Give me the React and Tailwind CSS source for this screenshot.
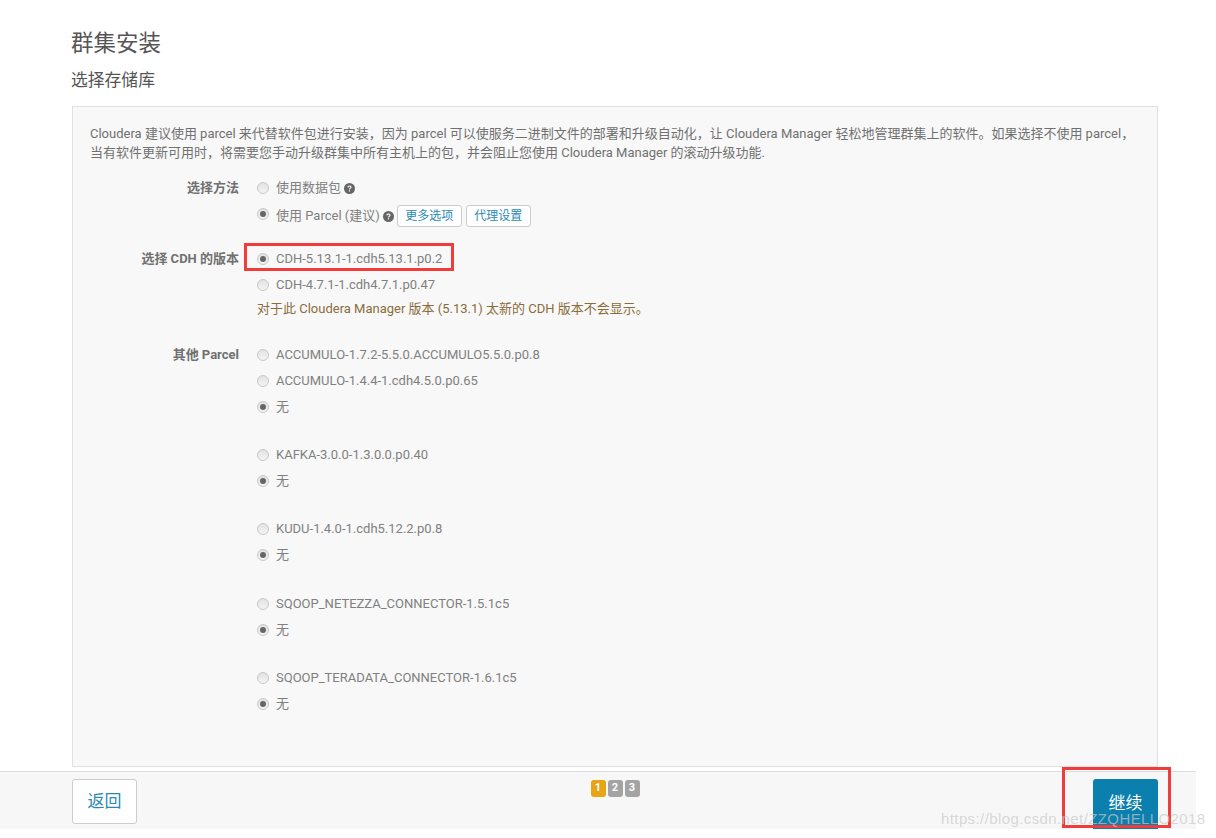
import React from 'react'

function Help({ className }) {
  return (
    <svg viewBox="0 0 24 24" className={'w-[11px] h-[11px] ml-[3px] shrink-0 ' + (className || '')}>
      <circle cx="12" cy="12" r="12" fill="#666" />
      <path d="M7.500 9.500c0-2.600 2-4 4.500-4s4.500 1.400 4.500 3.600c0 3-3.300 2.800-3.300 5.300h-2.500c0-3.500 3.100-3.300 3.100-5.100 0-.8-.8-1.400-1.800-1.400-1.100 0-1.800.7-1.800 1.800z" fill="#f7f7f7" />
      <rect x="10.700" y="15.800" width="2.500" height="2.800" fill="#f7f7f7" />
    </svg>
  )
}

function Radio({ checked, label, labelClass, children }) {
  return (
    <div className="flex items-center h-[26px]">
      <span className="w-[12px] h-[12px] rounded-full border border-[#c8c8c8] bg-gradient-to-b from-[#e2e2e2] to-[#f4f4f4] flex items-center justify-center shrink-0">
        {checked && <span className="w-[6px] h-[6px] rounded-full bg-[#666]" />}
      </span>
      <span className={'ml-[7px] text-[#808080] ' + (labelClass || '')}>{label}</span>
      {children}
    </div>
  )
}

function Row({ label, className, children }) {
  return (
    <div className={'flex ' + (className || '')}>
      <div className="w-[149px] shrink-0 h-[26px] leading-[26px] text-right font-bold text-[#707070]">{label}</div>
      <div className="ml-[18px]">{children}</div>
    </div>
  )
}

function SmallBtn({ children }) {
  return <button className="h-[22px] w-[65px] mt-[4px] ml-[4px] first-of-type:ml-[3px] bg-white border border-[#ccc] rounded-[3px] text-[12px] text-[#2b8ab5]">{children}</button>
}

const others = [
  ['ACCUMULO-1.7.2-5.5.0.ACCUMULO5.5.0.p0.8', 'ACCUMULO-1.4.4-1.cdh4.5.0.p0.65'],
  ['KAFKA-3.0.0-1.3.0.0.p0.40'],
  ['KUDU-1.4.0-1.cdh5.12.2.p0.8'],
  ['SQOOP_NETEZZA_CONNECTOR-1.5.1c5'],
  ['SQOOP_TERADATA_CONNECTOR-1.6.1c5'],
]

export default function App() {
  return (
    <div className="relative w-[1216px] h-[838px] overflow-hidden bg-white text-[13px] text-[#666] font-['Roboto','Noto_Sans_CJK_SC',sans-serif]">
      <div className="h-[771px] pl-[71px] pr-[58px] pt-[27px]">
        <h1 className="text-[22.500px] leading-[32px] text-[#555]">群集安装</h1>
        <h2 className="mt-[8px] text-[16.800px] leading-[26px] text-[#555]">选择存储库</h2>
        <div className="mt-[13px] ml-[1px] h-[661px] bg-[#f8f8f8] border border-[#e0e0e0] pl-[17px] pr-[6px] pt-[17px]">
          <p className="leading-[19px] text-[#707070] whitespace-nowrap">
            Cloudera 建议使用 parcel 来代替软件包进行安装，因为 parcel 可以使服务二进制文件的部署和升级自动化，让 Cloudera Manager 轻松地管理群集上的软件。如果选择不使用 parcel，
            <br />
            当有软件更新可用时，将需要您手动升级群集中所有主机上的包，并会阻止您使用 Cloudera Manager 的滚动升级功能.
          </p>
          <Row label="选择方法" className="mt-[13px]">
            <Radio label="使用数据包"><Help /></Radio>
            <Radio checked label="使用 Parcel (建议)" labelClass="mt-[4px]">
              <Help className="mt-[4px]" />
              <SmallBtn>更多选项</SmallBtn>
              <SmallBtn>代理设置</SmallBtn>
            </Radio>
          </Row>
          <Row label="选择 CDH 的版本" className="mt-[19px]">
            <Radio checked label="CDH-5.13.1-1.cdh5.13.1.p0.2" />
            <Radio label="CDH-4.7.1-1.cdh4.7.1.p0.47" />
            <p className="leading-[22px] text-[#8a6d3b]">对于此 Cloudera Manager 版本 (5.13.1) 太新的 CDH 版本不会显示。</p>
          </Row>
          <Row label="其他 Parcel" className="mt-[22px]">
            {others.map((group, i) => (
              <div key={i} className={i === 3 ? 'mt-[23px]' : i ? 'mt-[22px]' : ''}>
                {group.map(name => <Radio key={name} label={name} />)}
                <Radio checked label="无" />
              </div>
            ))}
          </Row>
        </div>
      </div>

      <div className="w-[1196px] h-[58px] bg-[#f7f7f7] border-t border-[#ddd] pl-[72px] pr-[38px] flex justify-between items-start">
        <button className="mt-[7px] w-[65px] h-[45px] bg-white border border-[#ccc] rounded-[3px] text-[17px] text-[#2b8ab5]">返回</button>
        <div className="mt-[8px] flex gap-[2px]">
          <span className="w-[15px] h-[17px] rounded-[3px] bg-[#e8a317] text-white text-[11px] font-bold flex items-center justify-center">1</span>
          <span className="w-[15px] h-[17px] rounded-[3px] bg-[#a3a3a3] text-white text-[11px] font-bold flex items-center justify-center">2</span>
          <span className="w-[15px] h-[17px] rounded-[3px] bg-[#a3a3a3] text-white text-[11px] font-bold flex items-center justify-center">3</span>
        </div>
        <button className="mt-[7px] w-[65px] h-[50px] bg-[#0b7fae] rounded-t-[3px] text-[17px] text-white">继续</button>
      </div>

      {/* red annotation boxes drawn over the screenshot */}
      <div className="absolute left-[244px] top-[243px] w-[210px] h-[28px] border-[3px] border-[#f23c3c]" />
      <div className="absolute left-[1062px] top-[767px] w-[109px] h-[61px] border-[3px] border-[#f23c3c]" />
      <div className="absolute left-[941px] top-[808px] text-[15px] tracking-[0.4px] text-[#c8c8c8]/70 font-['Liberation_Sans',sans-serif]">https://blog.csdn.net/ZZQHELLO2018</div>
    </div>
  )
}
